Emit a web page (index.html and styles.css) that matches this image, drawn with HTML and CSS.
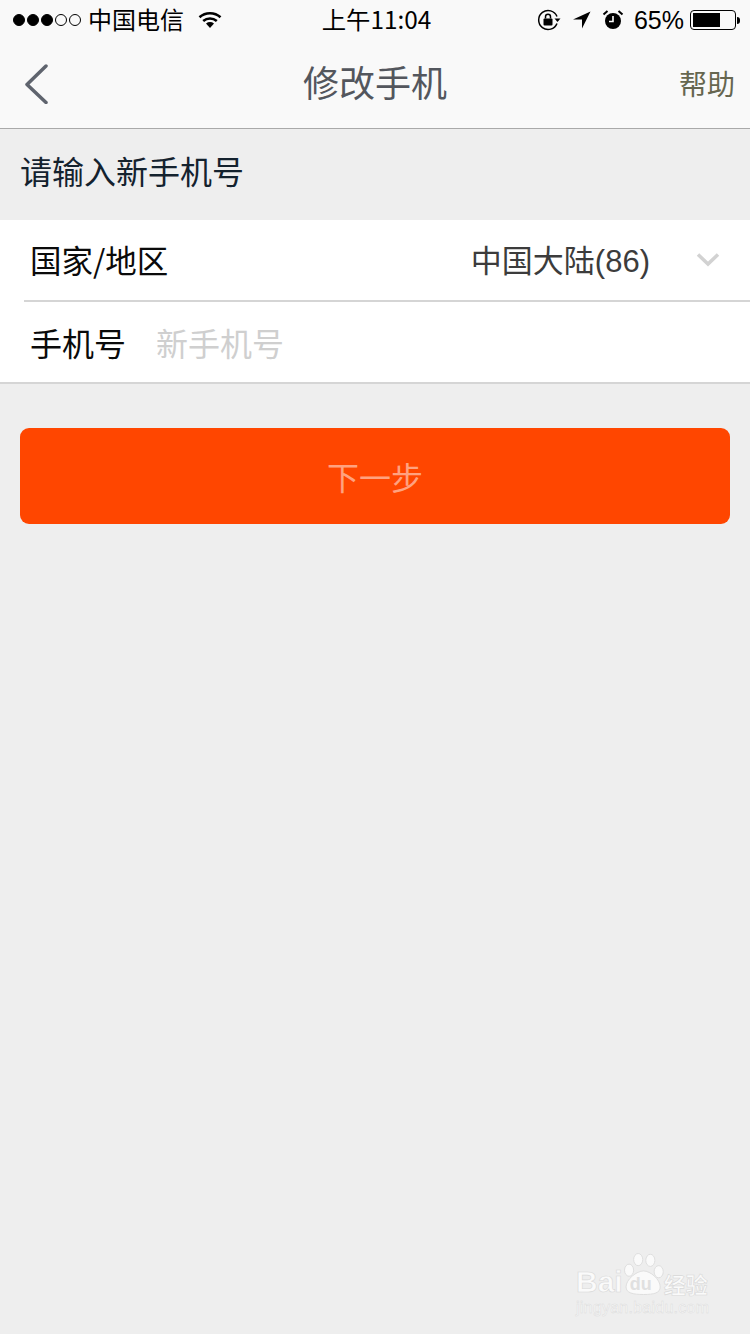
FILE: index.html
```html
<!DOCTYPE html>
<html lang="zh">
<head>
<meta charset="utf-8">
<title>修改手机</title>
<link rel="stylesheet" href="styles.css">
</head>
<body>
<div class="page">
  <header class="top">
    <div class="status">
      <div class="status-left">
        <span class="signal"><i class="dot on"></i><i class="dot on"></i><i class="dot on"></i><i class="dot"></i><i class="dot"></i></span>
        <span class="carrier">中国电信</span>
        <svg class="wifi" width="24" height="18" viewBox="0 0 24 18"><path d="M1.500 6.200C7.500 .9 16.500 .9 22.500 6.200" fill="none" stroke="#000" stroke-width="2.600"/><path d="M5.200 9.900c4-3.300 9.600-3.300 13.600 0" fill="none" stroke="#000" stroke-width="2.600"/><path d="M8 12.400c2.500-1.800 5.500-1.800 8 0l-4 4.600z" fill="#000"/></svg>
      </div>
      <div class="clock">上午11:04</div>
      <div class="status-right">
        <svg class="ic-lock" width="24" height="22" viewBox="0 0 24 22"><path d="M20 7.500A9.500 9.500 0 1 0 20 14.500" fill="none" stroke="#000" stroke-width="1.500"/><path d="M17.500 9.500h6l-3 3.500z" fill="#000"/><rect x="6.500" y="9.500" width="9" height="7" rx="1" fill="#000"/><path d="M8.500 9.500V7.800a2.500 2.500 0 0 1 5 0v1.700" fill="none" stroke="#000" stroke-width="1.500"/></svg>
        <svg class="ic-loc" width="18" height="18" viewBox="0 0 18 18"><path d="M17.500 .5L0 8.500h9v9z" fill="#000"/></svg>
        <svg class="ic-alarm" width="22" height="22" viewBox="0 0 22 22"><circle cx="11" cy="12" r="8" fill="#000"/><path d="M11 7v5.500H7" fill="none" stroke="#fff" stroke-width="1.600"/><path d="M1.500 5.500L5.500 2M20.500 5.500L16.500 2" stroke="#000" stroke-width="2"/></svg>
        <span class="pct">65%</span>
        <span class="battery"><span class="battery-fill"></span></span>
        <span class="battery-cap"></span>
      </div>
    </div>
    <nav class="nav">
      <svg class="back" width="24" height="40" viewBox="0 0 24 40"><path d="M22 2L3 20.500 22 38.500" fill="none" stroke="#5f646e" stroke-width="3.500" stroke-linecap="round" stroke-linejoin="round"/></svg>
      <h1 class="title">修改手机</h1>
      <span class="help">帮助</span>
    </nav>
  </header>

  <div class="hint">请输入新手机号</div>

  <section class="form">
    <div class="row row-region">
      <span class="label label-region">国家/地区</span>
      <span class="value">中国大陆(86)</span>
      <svg class="chev" width="24" height="15" viewBox="0 0 24 15"><path d="M2 2.500L12 12 22 2.500" fill="none" stroke="#d2d2d2" stroke-width="3.500"/></svg>
    </div>
    <div class="row row-phone">
      <span class="label">手机号</span>
      <span class="placeholder">新手机号</span>
    </div>
  </section>

  <div class="action"><button class="next" type="button">下一步</button></div>

  <div class="mark">
    <div class="mark-top">
      <span class="mark-bai">Bai</span>
      <span class="mark-paw">
        <svg viewBox="0 0 54 56"><g fill="#fafafa" stroke="#dcdcdc" stroke-width="1.200"><ellipse cx="8" cy="23" rx="6" ry="8"/><ellipse cx="20" cy="9" rx="6" ry="8"/><ellipse cx="36" cy="10" rx="6" ry="8"/><ellipse cx="47" cy="25" rx="6" ry="8"/><path d="M27 24c9 0 22 11 22 21 0 8-8 10-22 10S4 53 4 45c0-10 14-21 23-21z"/></g></svg>
        <span class="mark-du">du</span>
      </span>
      <span class="mark-cn">经验</span>
    </div>
    <div class="mark-url">jingyan.baidu.com</div>
  </div>
</div>
</body>
</html>
```
FILE: styles.css
```css
* { box-sizing: border-box; }
html, body { margin: 0; padding: 0; }
body {
  width: 750px;
  height: 1334px;
  overflow: hidden;
  background: #eeeeee;
  font-family: "Liberation Sans", "Noto Sans CJK SC", sans-serif;
}
.page { position: relative; width: 750px; height: 1334px; background: #eeeeee; }

.top { height: 129px; background: #f9f9f9; border-bottom: 1px solid #a9a9a9; }

.status {
  height: 40px;
  display: grid;
  grid-template-columns: 1fr auto 1fr;
  align-items: center;
  padding: 0 10px 0 13px;
  color: #000;
}
.status-left { display: flex; align-items: center; }
.signal { display: flex; gap: 1px; margin-right: 6px; }
.dot { width: 12px; height: 12px; border-radius: 50%; border: 1px solid #000; display: block; margin-right: 1px; }
.dot.on { background: #000; }
.carrier { font-size: 24px; line-height: 30px; margin-bottom: 2px; font-family: "Noto Sans CJK SC", sans-serif; }
.wifi { margin-left: 14px; }
.clock { font-size: 24.400px; line-height: 30px; margin-bottom: 2px; font-family: "Noto Sans CJK SC", sans-serif; }
.status-right { display: flex; align-items: center; justify-content: flex-end; }
.ic-lock { margin-right: 12px; }
.ic-loc { margin-right: 11px; }
.ic-alarm { margin-right: 10px; }
.pct { font-size: 25px; line-height: 30px; font-family: "Liberation Sans", sans-serif; margin-right: 6px; }
.battery { width: 46px; height: 20px; border: 1.500px solid #000; border-radius: 4px; padding: 2px; display: block; }
.battery-fill { display: block; width: 27px; height: 100%; background: #000; }
.battery-cap { width: 3px; height: 7px; background: #000; border-radius: 0 3px 3px 0; margin-left: 1px; }

.nav { position: relative; height: 88px; display: flex; align-items: center; justify-content: space-between; padding: 0 15px 0 24px; }
.back { display: block; }
.title {
  position: absolute;
  left: 0;
  right: 0;
  top: 0;
  margin: 0;
  text-align: center;
  font-size: 36px;
  line-height: 82px;
  font-weight: 400;
  color: #53565d;
  font-family: "Noto Sans CJK SC", sans-serif;
}
.help { font-size: 28px; line-height: 84px; margin-bottom: 2px; color: #66664f; font-family: "Noto Sans CJK SC", sans-serif; }

.hint {
  height: 91px;
  padding-left: 20px;
  font-size: 32px;
  line-height: 82px;
  color: #14222e;
  font-family: "Noto Sans CJK SC", sans-serif;
}

.form { background: #fff; border-bottom: 2px solid #d5d5d5; }
.row { display: flex; align-items: center; font-family: "Noto Sans CJK SC", sans-serif; }
.row-region { height: 82px; margin-left: 24px; padding: 0 30px 2px 6px; border-bottom: 2px solid #d5d5d5; }
.row-phone { height: 80px; padding: 0 0 0 30px; }
.label { font-size: 32px; color: #0a0a0a; line-height: 44px; }
.label-region { font-size: 31.500px; }
.value { margin-left: auto; padding-top: 6px; font-size: 31px; line-height: 44px; color: #3c3c3c; font-family: "Liberation Sans", "Noto Sans CJK SC", sans-serif; }
.chev { margin-left: 46px; }
.placeholder { margin-left: 30px; font-size: 32px; line-height: 44px; color: #cfcfcf; }

.action { padding: 44px 20px 0; }
.next {
  display: block;
  width: 100%;
  height: 96px;
  border: 0;
  padding: 0;
  border-radius: 9px;
  background: #ff4600;
  color: #ffa280;
  font-size: 32px;
  font-family: "Noto Sans CJK SC", sans-serif;
}

.mark { position: absolute; left: 576px; top: 1252px; width: 134px; color: #fafafa; }
.mark-top { display: flex; align-items: flex-end; height: 46px; }
.mark-bai { font-size: 30px; font-weight: 700; line-height: 30px; margin-bottom: 1px; -webkit-text-stroke: .6px #d8d8d8; }
.mark-paw { position: relative; width: 41px; height: 46px; flex: none; }
.mark-paw svg { position: absolute; left: 0; top: 0; width: 41px; height: 44px; }
.mark-du { position: absolute; left: 7px; bottom: 4px; font-size: 18px; line-height: 20px; font-weight: 700; color: #e0e0e0; }
.mark-cn { font-size: 22px; line-height: 28px; font-weight: 700; font-family: "Noto Sans CJK SC", sans-serif; margin-bottom: 1px; -webkit-text-stroke: .6px #d8d8d8; white-space: nowrap; }
.mark-url { font-size: 16px; line-height: 20px; letter-spacing: .25px; white-space: nowrap; -webkit-text-stroke: .5px #dcdcdc; }
```
